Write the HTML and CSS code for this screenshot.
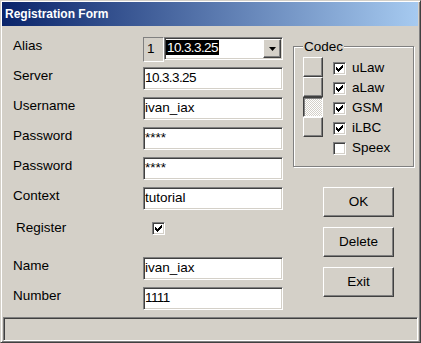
FILE: index.html
```
<!DOCTYPE html>
<html>
<head>
<meta charset="utf-8">
<link rel="stylesheet" href="styles.css">
</head>
<body>
<div class="window">
  <div class="titlebar">Registration Form</div>
  <div class="main">
    <div class="form">
      <div class="row">
        <span class="label">Alias</span>
        <div class="field alias-field">
          <div class="idx">1</div>
          <div class="combo">
            <span class="sel num">10.3.3.25</span>
            <div class="drop"><svg width="7" height="4" viewBox="0 0 7 4"><path d="M0 0h7L3.5 4z" fill="#000"/></svg></div>
          </div>
        </div>
      </div>
      <div class="row"><span class="label">Server</span><div class="field input num">10.3.3.25</div></div>
      <div class="row"><span class="label">Username</span><div class="field input">ivan_iax</div></div>
      <div class="row"><span class="label">Password</span><div class="field input">****</div></div>
      <div class="row"><span class="label">Password</span><div class="field input">****</div></div>
      <div class="row"><span class="label">Context</span><div class="field input">tutorial</div></div>
      <div class="row"><span class="label reg-label">Register</span>
        <div class="field"><span class="checkbox reg-box"><svg width="9" height="9" viewBox="0 0 9 9" shape-rendering="crispEdges"><path d="M1 3h1v3H1zM2 4h1v3H2zM3 5h1v3H3zM4 4h1v3H4zM5 3h1v3H5zM6 2h1v3H6zM7 1h1v3H7z" fill="#000"/></svg></span></div>
      </div>
      <div class="row row-gap"><span class="label">Name</span><div class="field input">ivan_iax</div></div>
      <div class="row"><span class="label">Number</span><div class="field input num">1111</div></div>
    </div>
    <div class="side">
      <fieldset class="group">
        <legend>Codec</legend>
        <div class="codec">
          <div class="stack">
            <div class="sbtn"></div>
            <div class="sbtn"></div>
            <div class="sbtn pressed"></div>
            <div class="sbtn"></div>
          </div>
          <div class="checks">
            <div class="chk"><span class="checkbox"><svg width="9" height="9" viewBox="0 0 9 9" shape-rendering="crispEdges"><path d="M1 3h1v3H1zM2 4h1v3H2zM3 5h1v3H3zM4 4h1v3H4zM5 3h1v3H5zM6 2h1v3H6zM7 1h1v3H7z" fill="#000"/></svg></span><span class="chk-label">uLaw</span></div>
            <div class="chk"><span class="checkbox"><svg width="9" height="9" viewBox="0 0 9 9" shape-rendering="crispEdges"><path d="M1 3h1v3H1zM2 4h1v3H2zM3 5h1v3H3zM4 4h1v3H4zM5 3h1v3H5zM6 2h1v3H6zM7 1h1v3H7z" fill="#000"/></svg></span><span class="chk-label">aLaw</span></div>
            <div class="chk"><span class="checkbox"><svg width="9" height="9" viewBox="0 0 9 9" shape-rendering="crispEdges"><path d="M1 3h1v3H1zM2 4h1v3H2zM3 5h1v3H3zM4 4h1v3H4zM5 3h1v3H5zM6 2h1v3H6zM7 1h1v3H7z" fill="#000"/></svg></span><span class="chk-label">GSM</span></div>
            <div class="chk"><span class="checkbox"><svg width="9" height="9" viewBox="0 0 9 9" shape-rendering="crispEdges"><path d="M1 3h1v3H1zM2 4h1v3H2zM3 5h1v3H3zM4 4h1v3H4zM5 3h1v3H5zM6 2h1v3H6zM7 1h1v3H7z" fill="#000"/></svg></span><span class="chk-label">iLBC</span></div>
            <div class="chk"><span class="checkbox"></span><span class="chk-label">Speex</span></div>
          </div>
        </div>
      </fieldset>
      <div class="buttons">
        <div class="btn">OK</div>
        <div class="btn">Delete</div>
        <div class="btn">Exit</div>
      </div>
    </div>
  </div>
  <div class="status"></div>
</div>
</body>
</html>
```
FILE: styles.css
```
* { box-sizing: border-box; }
html, body { margin: 0; padding: 0; }
body {
  width: 421px;
  height: 343px;
  overflow: hidden;
  background: #d4d0c8;
  font-family: "Liberation Sans", Arial, sans-serif;
  font-size: 13.5px;
  color: #000;
}
.window {
  width: 421px;
  height: 343px;
  display: flex;
  flex-direction: column;
  background: #d4d0c8;
  border: 1px solid;
  border-color: #d4d0c8 #404040 #404040 #d4d0c8;
  box-shadow: inset 1px 1px #fff, inset -1px -1px #808080;
  padding: 1px 2px 1px 1px;
}
.titlebar {
  flex: none;
  height: 24px;
  padding: 1px 0 0 3px;
  line-height: 23px;
  background: linear-gradient(to right, #0a246a, #a6caf0);
  color: #fff;
  font-weight: bold;
  font-size: 12px;
  white-space: nowrap;
}
.main {
  flex: 1;
  display: flex;
  align-items: flex-start;
  gap: 10px;
  padding: 11px 0 0 11px;
}
.form {
  display: flex;
  flex-direction: column;
  gap: 7px;
}
.row {
  display: flex;
  height: 23px;
}
.row-gap { margin-top: 10px; }
.label {
  width: 130px;
  line-height: 15px;
  padding-top: 1px;
  white-space: nowrap;
}
.reg-label { padding: 3px 0 0 3px; }
.field {
  width: 140px;
  height: 23px;
}
.num { letter-spacing: -0.6px; }
.input {
  background: #fff;
  border: 1px solid;
  border-color: #808080 #fff #fff #808080;
  box-shadow: inset 1px 1px #404040, inset -1px -1px #d4d0c8;
  padding: 2px 1px 0 1px;
  line-height: 15px;
  white-space: nowrap;
}
.alias-field { display: flex; }
.idx {
  flex: none;
  width: 21px;
  height: 25px;
  border: 1px solid;
  border-color: #808080 #fff #fff #808080;
  padding: 3px 0 0 3px;
  line-height: 15px;
}
.combo {
  flex: 1;
  height: 23px;
  display: flex;
  align-items: flex-start;
  background: #fff;
  border: 1px solid;
  border-color: #808080 #fff #fff #808080;
  box-shadow: inset 1px 1px #404040, inset -1px -1px #d4d0c8;
  padding: 1px;
}
.sel {
  margin-top: 1px;
  background: #000;
  color: #fff;
  line-height: 15px;
  padding: 0 1px;
}
.drop {
  margin-left: auto;
  width: 18px;
  height: 19px;
  background: #d4d0c8;
  border: 1px solid;
  border-color: #fff #404040 #404040 #fff;
  box-shadow: inset -1px -1px #808080;
  display: flex;
  align-items: center;
  justify-content: center;
  padding-top: 1px;
}
.drop svg { display: block; }
.checkbox {
  display: block;
  flex: none;
  width: 13px;
  height: 13px;
  background: #fff;
  border: 1px solid;
  border-color: #808080 #fff #fff #808080;
  box-shadow: inset 1px 1px #404040, inset -1px -1px #d4d0c8;
  padding: 1px;
}
.checkbox svg { display: block; }
.reg-box { margin: 5px 0 0 9px; }
.side {
  margin-top: 2px;
  display: flex;
  flex-direction: column;
}
.group {
  margin: 0;
  width: 121px;
  min-width: 0;
  border: 1px solid #808080;
  box-shadow: inset 1px 1px #fff, 1px 1px #fff;
  padding: 3px 0 9px 9px;
}
.group legend {
  padding: 0 1px;
  line-height: 15px;
  background: #d4d0c8;
}
.codec {
  display: flex;
  gap: 10px;
}
.stack {
  display: flex;
  flex-direction: column;
}
.sbtn {
  width: 20px;
  height: 20px;
  border: 1px solid;
  border-color: #fff #404040 #404040 #fff;
  box-shadow: inset -1px -1px #808080;
}
.sbtn.pressed {
  border-color: #404040 #fff #fff #404040;
  box-shadow: inset 1px 1px #808080;
  background: repeating-conic-gradient(#fff 0 25%, #d4d0c8 0 50%) 0 0 / 2px 2px;
}
.checks {
  display: flex;
  flex-direction: column;
}
.chk {
  display: flex;
  height: 20px;
  align-items: flex-start;
}
.chk .checkbox { margin-top: 5px; }
.chk-label {
  margin-left: 6px;
  padding-top: 3px;
  line-height: 15px;
}
.buttons {
  margin: 20px 0 0 30px;
  display: flex;
  flex-direction: column;
  gap: 10px;
}
.btn {
  width: 71px;
  height: 30px;
  border: 1px solid;
  border-color: #fff #404040 #404040 #fff;
  box-shadow: inset -1px -1px #808080;
  text-align: center;
  line-height: 28px;
}
.status {
  flex: none;
  height: 24px;
  margin-left: 1px;
  border: 1px solid;
  border-color: #808080 #fff #fff #808080;
  box-shadow: inset 1px 1px #404040;
}
```
